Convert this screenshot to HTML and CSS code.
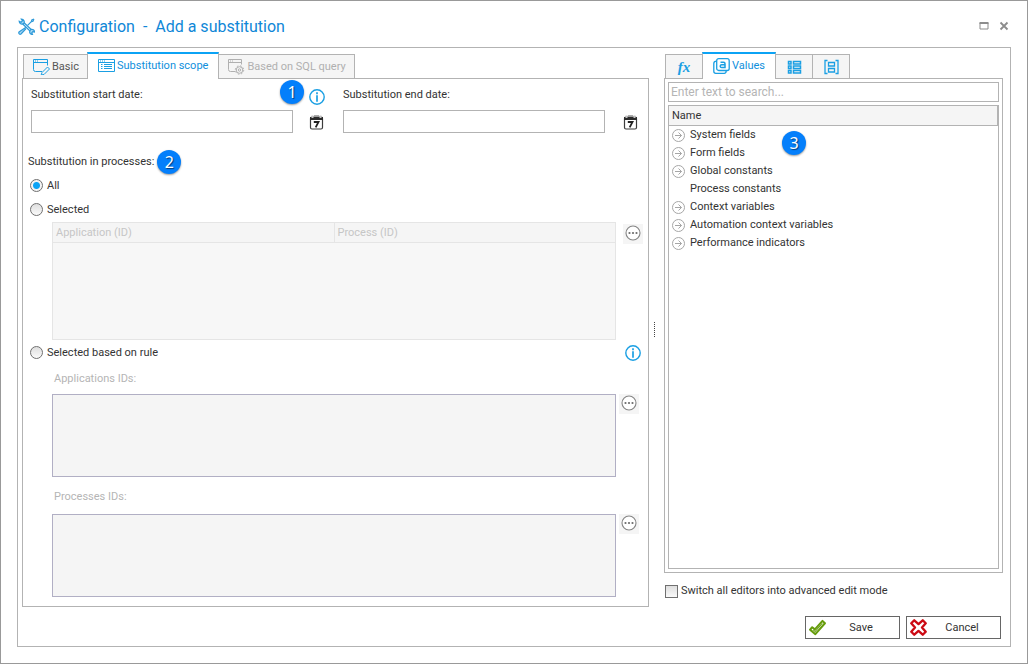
FILE: index.html
```html
<!DOCTYPE html>
<html lang="en">
<head>
<meta charset="utf-8">
<title>Configuration - Add a substitution</title>
<link rel="stylesheet" href="styles.css">
</head>
<body>
<svg class="defs" aria-hidden="true">
  <symbol id="i-info" viewBox="0 0 16 16"><circle cx="8" cy="8" r="7.2" fill="none" stroke="currentColor" stroke-width="1.4"/><path d="M8 3.3v1.9M8 6.3v6.4" stroke="currentColor" stroke-width="1.7"/></symbol>
  <symbol id="i-cal" viewBox="0 0 16 16"><rect x="1.500" y="3" width="12" height="12" rx="1.500" fill="#fff" stroke="#3c3c3c" stroke-width="1.200"/><path d="M1 3h13v3H1z" fill="#2b2b2b"/><path d="M2.500 1.500h2V4h-2zM10.500 1.500h2V4h-2z" fill="#c4c4c4"/><path d="M5 1h5v1H5z" fill="#aaa"/><path d="M4.800 8h4.700L6.700 13.300" fill="none" stroke="#222" stroke-width="1.800"/></symbol>
  <symbol id="i-more" viewBox="0 0 16 16"><circle cx="8" cy="8" r="7" fill="#fff" stroke="#858585" stroke-width="1.100"/><circle cx="4.500" cy="8" r="1.100" fill="#6b6b6b"/><circle cx="8" cy="8" r="1.100" fill="#6b6b6b"/><circle cx="11.500" cy="8" r="1.100" fill="#6b6b6b"/></symbol>
  <symbol id="i-arrow" viewBox="0 0 13 13"><g fill="none" stroke="#a6a6a6"><circle cx="6.500" cy="6.500" r="6"/><path d="M3 6.500h6.500M6.500 3.500l3 3-3 3"/></g></symbol>
</svg>

<main class="window">
  <header class="titlebar">
    <svg class="tools" viewBox="0 0 17 17" fill="none" stroke="currentColor" stroke-width="1.200"><path d="M4.500 5.800L12 13M5.800 4.500L13.200 11.500"/><path d="M5.600 5.600C7 4 6 1 3.300 1.100L4.500 2.800 3.100 4.200 1.200 3.200C1.200 5.500 3.500 7 5.600 5.600zM12 12.700c-1 2 .5 3.800 2.500 3.800l-.7-1.600 1-1.200 1.700.3c0-2-1.800-3.200-3.700-2.500z" fill="#a8d8f3"/><path d="M16 1l-2.200 1-.5 1.600L9.600 7.300M16 1l-1 2.200-1.500.5"/><path d="M7.800 9.200l-1.400 1.300M6.500 10.200l1 1L3 16c-1.300.8-2.800-.6-2-2z" fill="#a8d8f3"/></svg>
    <h1 class="title">Configuration&nbsp; -&nbsp; Add a substitution</h1>
    <button class="winbtn" aria-label="Maximize"><svg viewBox="0 0 10 10"><path d="M1 2h8v6H1z" fill="none" stroke="#8c8c8c"/><path d="M.5 2h9" stroke="#8c8c8c" stroke-width="2"/></svg></button>
    <button class="winbtn" aria-label="Close"><svg viewBox="0 0 10 10"><path d="M1.500 1.500l7 7M8.500 1.500l-7 7" stroke="#8c8c8c" stroke-width="1.800"/></svg></button>
  </header>

  <div class="frame">
    <div class="columns">
      <section class="scope">
        <div class="tabs" role="tablist">
          <button class="tab" role="tab"><svg class="ico blue" viewBox="0 0 17 16" fill="none" stroke="currentColor"><path d="M9 12.500H2.500a2 2 0 0 1-2-2V.5h14v6M.5 3.500h14M2 2h1M4 2h1"/><path d="M9 13.500l5.500-5.500 2 2-5.500 5.500-2.800.4z"/></svg>Basic</button>
          <button class="tab active" role="tab" aria-selected="true"><svg class="ico blue" viewBox="0 0 17 16" fill="none" stroke="currentColor"><path d="M.5 1.500h16v12H.5zM.5 4.500h16M2 3h1M4 3h1M6 3h1M3 6.500h1.500M6 6.500h8M3 8.500h1.500M6 8.500h8M3 10.500h1.500M6 10.500h8"/></svg>Substitution scope</button>
          <button class="tab disabled" role="tab" disabled><svg class="ico" viewBox="0 0 17 16" fill="none" stroke="currentColor"><path d="M7 12.500H2.500a2 2 0 0 1-2-2V.5h13v5M.5 3.500h13M2 2h1M4 2h1"/><circle cx="11.500" cy="11" r="3.300"/><circle cx="11.500" cy="11" r="1.200"/><circle cx="11.500" cy="11" r="4.200" stroke-dasharray="1.600 1.700"/></svg>Based on SQL query</button>
        </div>
        <div class="pane scope-pane">
          <div class="dates">
            <div class="date">
              <label for="start">Substitution start date:</label>
              <span class="info-wrap"><span class="badge badge-1">1</span><button class="iconbtn" aria-label="Date information"><svg class="info blue"><use href="#i-info"/></svg></button></span>
              <input id="start" class="box" type="text">
              <button class="iconbtn" aria-label="Pick start date"><svg class="cal"><use href="#i-cal"/></svg></button>
            </div>
            <div class="date date-end">
              <label for="end">Substitution end date:</label>
              <span></span>
              <input id="end" class="box" type="text">
              <button class="iconbtn" aria-label="Pick end date"><svg class="cal"><use href="#i-cal"/></svg></button>
            </div>
          </div>

          <div class="group-title">Substitution in processes:<span class="badge">2</span></div>
          <label class="choice"><input type="radio" name="mode" checked>All</label>
          <label class="choice"><input type="radio" name="mode">Selected</label>

          <div class="editor">
            <table class="grid">
              <thead><tr><th>Application (ID)</th><th>Process (ID)</th></tr></thead>
              <tbody><tr><td colspan="2"></td></tr></tbody>
            </table>
            <button class="more more-end" aria-label="Choose processes"><svg><use href="#i-more"/></svg></button>
          </div>

          <div class="rule-row">
            <label class="choice"><input type="radio" name="mode">Selected based on rule</label>
            <button class="iconbtn" aria-label="Rule information"><svg class="info blue"><use href="#i-info"/></svg></button>
          </div>

          <label class="sub-label" for="apps">Applications IDs:</label>
          <div class="editor">
            <textarea id="apps" class="area" disabled></textarea>
            <button class="more" aria-label="Edit application rule"><svg><use href="#i-more"/></svg></button>
          </div>
          <label class="sub-label" for="procs">Processes IDs:</label>
          <div class="editor">
            <textarea id="procs" class="area" disabled></textarea>
            <button class="more" aria-label="Edit process rule"><svg><use href="#i-more"/></svg></button>
          </div>
        </div>
      </section>

      <div class="splitter"><span class="grip"></span></div>

      <aside class="side">
        <div class="tabs" role="tablist">
          <button class="tab small" role="tab" aria-label="Functions"><span class="fx">fx</span></button>
          <button class="tab active values" role="tab" aria-selected="true"><svg class="ico blue" viewBox="0 0 17 16" fill="none" stroke="currentColor" stroke-width="1.300"><rect x="3.700" y=".7" width="12.500" height="11.800" rx="2"/><path d="M3.500 3.200C1.500 3.200.8 4 .8 5.500v7.700c0 1.500.7 2.100 2 2.100h8.400c1.400 0 2-.8 2-2.500"/><path d="M7.500 4.300h3c1 0 1.500.4 1.500 1.400v3.800H8.700c-2 0-2-2.700 0-2.700H12" stroke-width="1.500"/></svg>Values</button>
          <button class="tab small" role="tab" aria-label="Fields"><svg class="ico blue" viewBox="0 0 16 16" fill="none" stroke="currentColor" stroke-width="1.500"><path d="M2 2.500h2.500v2.500H2zM2 7h2.500v2.500H2zM2 11.500h2.500V14H2zM7 2.500h7v2.500H7zM7 7h7v2.500H7zM7 11.500h7V14H7z"/></svg></button>
          <button class="tab small" role="tab" aria-label="Containers"><svg class="ico blue" viewBox="0 0 16 16" fill="none" stroke="currentColor" stroke-width="1.300"><path d="M4 1.500H1.500v13H4M12 1.500h2.500v13H12M5 3.500h6v3.500H5zM5 9.500h6V13H5z"/></svg></button>
        </div>
        <div class="pane side-pane">
          <input class="box search" type="text" placeholder="Enter text to search..." aria-label="Search">
          <div class="tree">
            <div class="tree-head">Name</div>
            <ul class="tree-list">
              <li><button><svg><use href="#i-arrow"/></svg>System fields</button></li>
              <li><button><svg><use href="#i-arrow"/></svg>Form fields</button></li>
              <li><button><svg><use href="#i-arrow"/></svg>Global constants</button></li>
              <li><button><svg></svg>Process constants</button></li>
              <li><button><svg><use href="#i-arrow"/></svg>Context variables</button></li>
              <li><button><svg><use href="#i-arrow"/></svg>Automation context variables</button></li>
              <li><button><svg><use href="#i-arrow"/></svg>Performance indicators</button></li>
            </ul>
            <span class="badge badge-3">3</span>
          </div>
        </div>
        <label class="advanced"><input type="checkbox">Switch all editors into advanced edit mode</label>
      </aside>
    </div>

    <footer class="actions">
      <button class="action"><svg viewBox="0 0 16 16"><path d="M1 10l2-2.200 2.500 2L12.700 1.800 15 4 6 14.300z" fill="#fff" stroke="#669c0c" stroke-width="1.900" stroke-linejoin="round"/><path d="M4 10.300l1.800 1.500L12.500 4" fill="none" stroke="#669c0c"/></svg><span>Save</span></button>
      <button class="action"><svg viewBox="0 0 16 16"><path d="M4 1.200L8 4.800l4-3.600L14.800 4 11.300 8l3.500 4-2.800 2.800-4-3.600-4 3.600L1.200 12l3.500-4-3.500-4z" fill="#fff" stroke="#cc0a14" stroke-width="2.200" stroke-linejoin="round"/></svg><span>Cancel</span></button>
    </footer>
  </div>
</main>
</body>
</html>
```
FILE: styles.css
```css
* { box-sizing: border-box; }
body {
  margin: 0;
  background: #fff;
  color: #333;
  font: 11px/18px Roboto, Tahoma, sans-serif;
}
button, input, textarea { font: inherit; color: inherit; }
button { border: 0; padding: 0; background: none; }
.defs { position: absolute; width: 0; height: 0; }
.blue { color: #1a9fe3; }

.window {
  display: flex;
  flex-direction: column;
  min-height: 100vh;
  padding: 0 16px 16px;
  border: 1px solid #999;
}
.titlebar {
  display: flex;
  align-items: center;
  gap: 10px;
  height: 46px;
  padding: 4px 2px 0 1px;
}
.tools { width: 17px; height: 17px; margin-right: -6px; color: #2f9ad9; }
.title { flex: 1; margin: 0; padding-top: 2px; font-size: 16px; line-height: 22px; font-weight: 400; color: #0f87d7; }
.winbtn { display: flex; }
.winbtn svg { width: 10px; height: 10px; }

.frame {
  flex: 1;
  display: flex;
  flex-direction: column;
  padding: 4px 7px 7px 4px;
  border: 1px solid #b3b3b3;
}
.columns { flex: 1; display: flex; }
.scope { flex: 1; display: flex; flex-direction: column; padding-bottom: 9px; }

.tabs {
  display: flex;
  align-items: flex-end;
  height: 27px;
  margin: 0 0 -1px 1px;
  z-index: 1;
}
.tab {
  display: flex;
  align-items: center;
  justify-content: center;
  gap: 2px;
  height: 24px;
  margin-bottom: 1px;
  padding: 0 8px 0 9px;
  border: 1px solid #b3b3b3;
  border-bottom: 0;
  background: #f5f5f5;
  color: #555;
}
.tab + .tab { border-left: 0; }
.tab:has(+ .active) { border-right: 0; }
.tabs .tab.active {
  height: 27px;
  margin: 0;
  padding: 0 10px 2px;
  border-left: 1px solid #b3b3b3;
  border-top: 2px solid #0ba3f5;
  background: #fff;
  color: #0f8fdc;
}
.tabs .tab.values { padding: 0 10px 2px; }
.tab.disabled { color: #b0b0b0; }
.tab.small { width: 37px; padding: 0; }
.ico { width: 17px; height: 16px; }
.fx { font: italic bold 15px/18px "Liberation Serif", serif; color: #1a9fe3; }

.pane { border: 1px solid #b3b3b3; }
.scope-pane { flex: 1; padding: 6px 6px 9px 7px; }
.dates { display: grid; grid-template-columns: 294fr 296fr; gap: 18px; padding: 0 3px 0 1px; }
.date {
  display: grid;
  grid-template-columns: 1fr 16px;
  grid-template-rows: 20px 23px;
  gap: 5px 16px;
  align-items: center;
}
.date-end { column-gap: 18px; }
.box { width: 100%; border: 1px solid #b3b3b3; background: #fff; padding: 0 3px; }
.date .box { height: 23px; }
.iconbtn { display: flex; }
.info, .cal { width: 16px; height: 16px; }
.info-wrap { position: relative; padding-top: 4px; }

.badge {
  display: inline-flex;
  align-items: center;
  justify-content: center;
  width: 24px;
  height: 24px;
  border-radius: 50%;
  background: #047ffb;
  box-shadow: 0 1px 2px #0006;
  color: #fff;
  font-family: "Noto Sans", sans-serif;
  font-size: 16px;
  text-shadow: 1px 1px 1px #0008;
}
.badge-1 { position: absolute; right: 21px; top: -5px; }
.badge-3 { position: absolute; left: 113px; top: 25px; }

.group-title { display: flex; align-items: center; gap: 3px; margin: 17px 0 0 -2px; }
.choice { display: flex; align-items: center; gap: 4px; height: 25px; }
.group-title + .choice { height: 23px; }
input[type="radio"], input[type="checkbox"] {
  appearance: none;
  width: 13px;
  height: 13px;
  margin: 0;
  border: 1px solid #707070;
  background: linear-gradient(#dedede, #fafafa);
}
input[type="radio"] { border-radius: 50%; }
input[type="radio"]:checked { background: radial-gradient(circle, #0ba3f5 3px, #f3f3f3 4px); }

.editor { display: grid; grid-template-columns: 1fr 26px; align-items: start; padding-left: 22px; }
.grid { width: 100%; border-collapse: collapse; table-layout: fixed; background: #f7f7f7; color: #c6c6c6; }
.grid th, .grid td { border: 1px solid #e5e5e5; }
.grid th { height: 20px; padding: 0 3px; text-align: left; font-weight: 400; background: #f5f5f5; }
.grid td { height: 97px; }
.more { display: flex; align-items: flex-start; justify-content: center; width: 20px; height: 20px; margin-left: 3px; padding: 1px 1px 0 0; background: #f5f5f5; }
.more-end { margin: 2px 0 0 7px; }
.more svg { width: 16px; height: 16px; }
.rule-row { display: flex; align-items: center; justify-content: space-between; padding-right: 1px; }
.sub-label { display: block; margin: 5px 0 6px 24px; color: #b5b5b5; }
.area { display: block; width: 100%; height: 83px; resize: none; border: 1px solid #b1afc4; background: #f5f5f5; }
.editor + .sub-label { margin-top: 11px; margin-bottom: 8px; }

.splitter { display: flex; align-items: center; width: 15px; padding: 0 0 10px 5px; }
.grip { width: 1px; height: 15px; background: repeating-linear-gradient(#444 0 1px, #fff 1px 2px); }

.side { display: flex; flex-direction: column; width: 339px; }
.side-pane { flex: 1; display: flex; flex-direction: column; gap: 3px; padding: 3px; }
.search { height: 20px; padding: 0 2px; font-size: 12px; }
.search::placeholder { color: #b5b5b5; opacity: 1; }
.tree { position: relative; flex: 1; border: 1px solid #b3b3b3; }
.tree-head { height: 20px; padding: 1px 0 0 3px; border-right: 1px solid #b3b3b3; border-bottom: 1px solid #b3b3b3; background: #f5f5f5; }
.tree-list { margin: 0; padding: 0 3px; list-style: none; }
.tree-list button { display: flex; align-items: center; gap: 5px; height: 18px; }
.tree-list svg { width: 13px; height: 13px; }
.advanced { display: flex; align-items: center; gap: 3px; height: 18px; margin: 9px 0 16px 1px; }

.actions { display: flex; justify-content: flex-end; gap: 6px; padding-right: 2px; }
.action { display: flex; align-items: center; width: 95px; height: 23px; padding: 0 3px; border: 1px solid #666; }
.action svg { width: 17px; height: 17px; }
.action span { flex: 1; text-align: center; }
```
